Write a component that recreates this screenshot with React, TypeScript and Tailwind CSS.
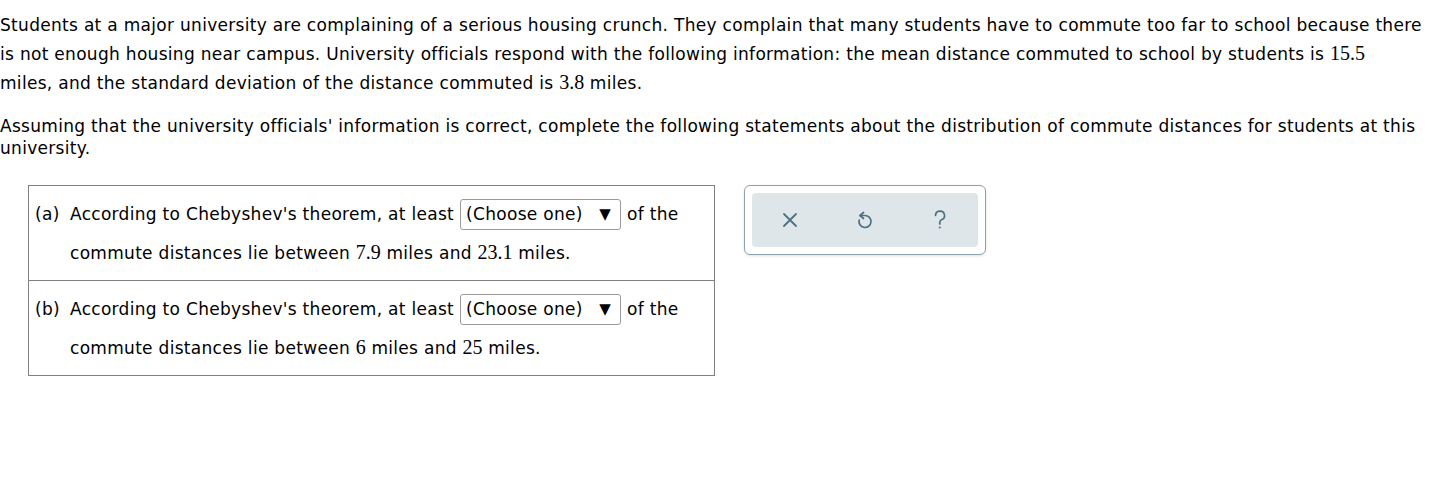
import React from "react";

const M = ({ children }: { children: React.ReactNode }) => (
  <span className="font-['Liberation_Serif',serif] text-[20px] tracking-normal">{children}</span>
);

function Choose() {
  return (
    <span className="mx-[6px] inline-flex h-[31px] w-[161px] items-center justify-between rounded-[3px] border border-[#9a9a9a] bg-white pl-[5px] pr-[9px]">
      <span>(Choose one)</span>
      <span className="text-[15px]">▼</span>
    </span>
  );
}

function Row({ tag, lo, hi, last }: { tag: string; lo: string; hi: string; last?: boolean }) {
  return (
    <div className={`flex pl-[6px] pt-[13px] pb-[16px] ${last ? "" : "border-b border-[#808080]"}`}>
      <div className="w-[35px] leading-[31px]">({tag})</div>
      <div className="flex flex-col gap-[11px]">
        <div className="flex h-[31px] items-center whitespace-nowrap">
          According to Chebyshev's theorem, at least
          <Choose />
          of the
        </div>
        <div className="leading-[22px] whitespace-nowrap">
          commute distances lie between <M>{lo}</M> miles and <M>{hi}</M> miles.
        </div>
      </div>
    </div>
  );
}

export default function App() {
  return (
    <div className="h-[480px] w-[1446px] bg-white font-['DejaVu_Sans',Verdana,sans-serif] text-[17px] tracking-[0.3px] text-black">
      <p className="whitespace-nowrap pt-[11px] leading-[28px]">
        Students at a major university are complaining of a serious housing crunch. They complain that many students have to commute too far to school because there
        <br />
        is not enough housing near campus. University officials respond with the following information: the mean distance commuted to school by students is <M>15.5</M>
        <br />
        miles, and the standard deviation of the distance commuted is <M>3.8</M> miles.
      </p>
      <p className="mt-[18px] whitespace-nowrap leading-[22px]">
        Assuming that the university officials' information is correct, complete the following statements about the distribution of commute distances for students at this
        <br />
        university.
      </p>
      <div className="mt-[26px] flex items-start gap-[29px] pl-[28px]">
        <div className="w-[687px] border border-[#808080]">
          <Row tag="a" lo="7.9" hi="23.1" />
          <Row tag="b" lo="6" hi="25" last />
        </div>
        <div className="rounded-[6px] border border-[#8aa2ac] p-[7px] shadow-[0_1px_3px_rgba(0,0,0,0.12)]">
          <div className="flex h-[54px] w-[226px] items-center justify-between rounded-[4px] bg-[#dee6e9] px-[30px] text-[#4c7280]">
            <svg width="16" height="16" viewBox="0 0 16 16" fill="none" stroke="currentColor" strokeWidth="1.8" strokeLinecap="round">
              <path d="M2 2 L14 14 M14 2 L2 14" />
            </svg>
            <svg width="16" height="19" viewBox="0 0 16 19" fill="none" stroke="currentColor" strokeWidth="1.7" strokeLinecap="round" strokeLinejoin="round">
              <path d="M6.5 1.5 L3 4.5 L6.5 7.5" />
              <path d="M3 4.5 H8 A6 6 0 1 1 2.2 9" />
            </svg>
            <svg width="16" height="20" viewBox="0 0 16 20" fill="none" stroke="currentColor" strokeWidth="1.7" strokeLinecap="round">
              <path d="M3.5 5.5 A4.5 4.5 0 1 1 9.5 9.8 C8.3 10.4 7.8 11.2 7.8 12.4 V14" />
              <circle cx="7.8" cy="17.6" r="1" fill="currentColor" stroke="none" />
            </svg>
          </div>
        </div>
      </div>
    </div>
  );
}
